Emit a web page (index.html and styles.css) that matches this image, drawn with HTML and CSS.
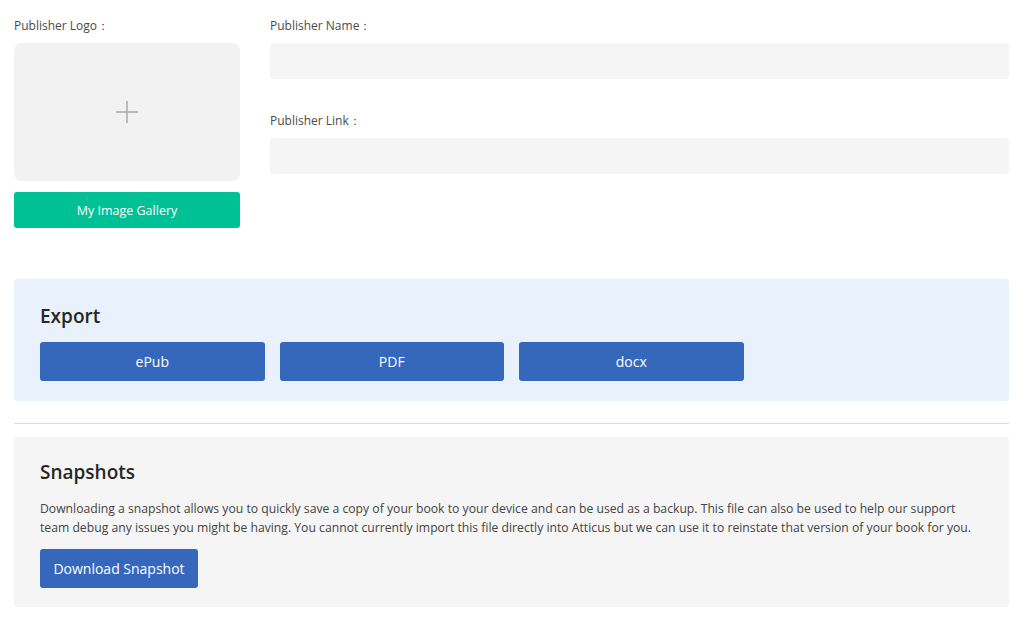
FILE: index.html
```html
<!DOCTYPE html>
<html>
<head>
<meta charset="utf-8">
<link rel="stylesheet" href="styles.css">
</head>
<body>
<div class="page">
  <div class="publisher">
    <div class="logo-col">
      <div class="label">Publisher Logo：</div>
      <div class="logo-box">
        <svg class="plus" width="22" height="22" viewBox="0 0 22 22"><path d="M11 0V22M0 11H22" stroke="#a6a6a6" stroke-width="1.4" fill="none"/></svg>
      </div>
      <button class="btn btn-green">My Image Gallery</button>
    </div>
    <div class="fields-col">
      <div class="label">Publisher Name：</div>
      <div class="input"></div>
      <div class="label label-gap">Publisher Link：</div>
      <div class="input"></div>
    </div>
  </div>

  <div class="panel panel-export">
    <h2 class="panel-title">Export</h2>
    <div class="export-buttons">
      <button class="btn btn-blue btn-export">ePub</button>
      <button class="btn btn-blue btn-export">PDF</button>
      <button class="btn btn-blue btn-export">docx</button>
    </div>
  </div>

  <hr class="divider">

  <div class="panel panel-snap">
    <h2 class="panel-title">Snapshots</h2>
    <p class="snap-text">Downloading a snapshot allows you to quickly save a copy of your book to your device and can be used as a backup. This file can also be used to help our support team debug any issues you might be having. You cannot currently import this file directly into Atticus but we can use it to reinstate that version of your book for you.</p>
    <button class="btn btn-blue btn-snap">Download Snapshot</button>
  </div>
</div>
</body>
</html>
```

FILE: styles.css
```css
* { box-sizing: border-box; }
html, body { margin: 0; padding: 0; background: #fff; }
body { font-family: "Open Sans", "Noto Sans", sans-serif; color: #333; }

.page { padding: 17px 15px 0 14px; }

.publisher { display: flex; gap: 30px; }
.logo-col { width: 226px; flex: none; display: flex; flex-direction: column; }
.fields-col { flex: 1; display: flex; flex-direction: column; }

.label { font-size: 12px; line-height: 18px; color: #4a4a4a; margin-bottom: 8px; }
.label-gap { margin-top: 33px; }

.logo-box {
  height: 138px; background: #f2f2f2; border-radius: 8px;
  display: flex; align-items: center; justify-content: center;
}
.plus { display: block; margin-top: -1px; }

.input { height: 36px; background: #f5f5f5; border-radius: 4px; }

.btn {
  border: none; color: #fff; font-family: inherit; cursor: pointer;
  display: flex; align-items: center; justify-content: center; padding: 0;
}
.btn-green { margin-top: 11px; height: 36px; background: #00c196; border-radius: 3px; font-size: 12.5px; }
.btn-blue { background: #3567bd; border-radius: 3px; }

.panel { border-radius: 4px; padding: 0 26px; }
.panel-export { margin-top: 51px; background: #e8f1fc; padding-top: 24px; padding-bottom: 20px; }
.panel-title { margin: 0; font-size: 19px; line-height: 26px; font-weight: 600; color: #262626; }
.export-buttons { margin-top: 13px; display: flex; gap: 15px; }
.btn-export { width: 224.5px; height: 39px; font-size: 14px; }

.divider { margin: 22px 0 13px; border: none; height: 1px; background: #d9dce7; }

.panel-snap { background: #f5f5f5; padding-top: 22px; padding-bottom: 19px; }
.snap-text { margin: 14px 0 0; font-size: 12.2px; line-height: 19px; color: #444; }
.btn-snap { margin-top: 12px; width: 158px; height: 39px; font-size: 14px; }
```
